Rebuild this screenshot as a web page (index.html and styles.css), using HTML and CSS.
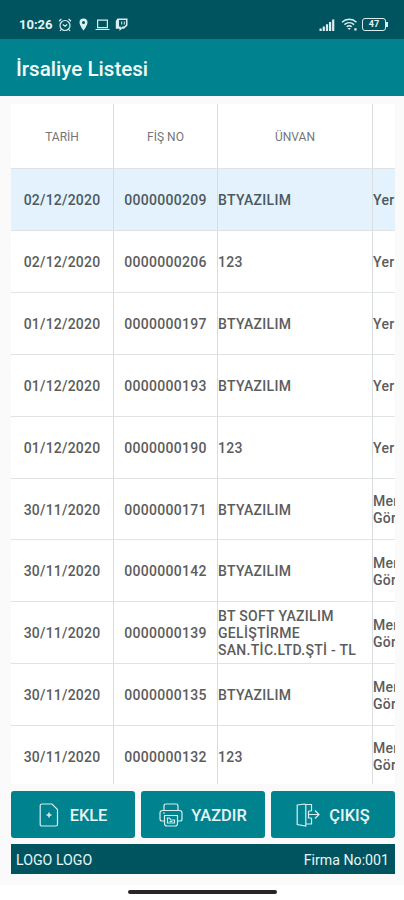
FILE: index.html
```html
<!DOCTYPE html>
<html lang="tr">
<head>
    <meta charset="UTF-8">
    <meta name="viewport" content="width=device-width, initial-scale=1.0">
    <title>İrsaliye Listesi</title>
    <link rel="stylesheet" href="styles.css">
</head>
<body>

    <div class="status-bar">
        <span class="clock">10:26</span>
        <svg class="alarm" width="14" height="14" viewBox="0 0 14 14">
            <circle cx="7" cy="7.5" r="5"/>
            <path d="M1 3.2L3.4 1M13 3.2L10.6 1M4.8 6.5L7 8.3L9.2 6.5M3.2 11.5L2 13M10.8 11.5L12 13"/>
        </svg>
        <svg class="pin" width="9" height="13" viewBox="0 0 9 13">
            <path class="solid" fill-rule="evenodd" d="M4.5 0.5A4 4 0 0 0 0.5 4.5C0.5 7.5 4.5 12.5 4.5 12.5S8.5 7.5 8.5 4.5A4 4 0 0 0 4.5 0.5ZM4.5 3A1.5 1.5 0 1 1 4.5 6A1.5 1.5 0 1 1 4.5 3Z"/>
        </svg>
        <svg class="laptop" width="15" height="12" viewBox="0 0 15 12">
            <path d="M2.6 1.2H12.4V8.6H2.6ZM0.5 10.5H14.5"/>
        </svg>
        <svg class="twitch" width="13" height="14" viewBox="0 0 13 14">
            <path class="solid" fill-rule="evenodd" d="M2.5 0.5H12.5V7.5L9 10.8H6.8L4.5 13V10.8H0.8V3ZM4 2V8.5H5.8V10L7.4 8.5H9L11 6.7V2ZM6.2 3.6H7.2V6.5H6.2ZM8.8 3.6H9.8V6.5H8.8Z"/>
        </svg>
        <span class="space"></span>
        <svg class="signal" width="16" height="12" viewBox="0 0 16 12">
            <path class="solid" d="M0.5 9.5H2.7V12H0.5ZM3.7 7.5H5.9V12H3.7ZM6.9 5.3H9.1V12H6.9ZM10 3H12.2V12H10ZM13.1 0.5H15.3V12H13.1Z"/>
        </svg>
        <svg class="wifi" width="17" height="13" viewBox="0 0 17 13">
            <path d="M1 4.2C5 0.4 11.5 0.4 15.5 4.2M3.4 6.6C6.3 4 10.2 4 13.1 6.6M5.7 8.8C7.2 7.5 9.3 7.5 10.8 8.8"/>
            <path class="solid" d="M6.5 10L8.25 12L10 10ZM13.3 10.2H15.6V12.5H13.3Z"/>
        </svg>
        <span class="battery">47</span>
        <span class="battery-tip"></span>
    </div>

    <div class="header">İrsaliye Listesi</div>

    <main>
        <div class="list">
            <div class="row head"><div>TARİH</div><div>FİŞ NO</div><div>ÜNVAN</div><div></div></div>
            <div class="row selected"><div>02/12/2020</div><div>0000000209</div><div>BTYAZILIM</div><div>Yer</div></div>
            <div class="row"><div>02/12/2020</div><div>0000000206</div><div>123</div><div>Yer</div></div>
            <div class="row"><div>01/12/2020</div><div>0000000197</div><div>BTYAZILIM</div><div>Yer</div></div>
            <div class="row"><div>01/12/2020</div><div>0000000193</div><div>BTYAZILIM</div><div>Yer</div></div>
            <div class="row"><div>01/12/2020</div><div>0000000190</div><div>123</div><div>Yer</div></div>
            <div class="row"><div>30/11/2020</div><div>0000000171</div><div>BTYAZILIM</div><div>Mer<br>Gör</div></div>
            <div class="row"><div>30/11/2020</div><div>0000000142</div><div>BTYAZILIM</div><div>Mer<br>Gör</div></div>
            <div class="row"><div>30/11/2020</div><div>0000000139</div><div>BT SOFT YAZILIM<br>GELİŞTİRME<br>SAN.TİC.LTD.ŞTİ - TL</div><div>Mer<br>Gör</div></div>
            <div class="row"><div>30/11/2020</div><div>0000000135</div><div>BTYAZILIM</div><div>Mer<br>Gör</div></div>
            <div class="row"><div>30/11/2020</div><div>0000000132</div><div>123</div><div>Mer<br>Gör</div></div>
        </div>

        <div class="buttons">
            <button class="btn">
                <svg width="20" height="24" viewBox="0 0 20 24">
                    <path d="M3 1H13L18.5 6.5V21.5Q18.5 23 17 23H3Q1.2 23 1.2 21.5V2.5Q1.2 1 3 1Z"/>
                    <path class="plus" d="M10 9.5V14.5M7.5 12H12.5"/>
                </svg>
                <span>EKLE</span>
            </button>
            <button class="btn print">
                <svg width="24" height="24" viewBox="0 0 24 24">
                    <path d="M5 7V3Q5 1 7 1H17Q19 1 19 3V7M5 18H3Q1 18 1 16V10Q1 7.5 3.5 7.5H20.5Q23 7.5 23 10V16Q23 18 21 18H19M5 12.5H19M5.5 13V20.5Q5.5 23 8 23H16Q18.5 23 18.5 20.5V13M8.5 15V20H15.5V17H12L10.5 15ZM10.5 18.5H13.5"/>
                    <path d="M4 10H6"/>
                </svg>
                <span>YAZDIR</span>
            </button>
            <button class="btn exit">
                <svg width="24" height="24" viewBox="0 0 24 24">
                    <path d="M1.2 2L8.5 1Q9.8 1 9.8 2.5V23L1.2 21.5ZM9.8 1.5H15.5V8M9.8 21H15.5V15M12.5 8V15H15.5M12.5 8H15.5M13 11.5H23M19 7.5L23 11.5L19 15.5"/>
                </svg>
                <span>ÇIKIŞ</span>
            </button>
        </div>

        <div class="footer">
            <span>LOGO LOGO</span>
            <span>Firma No:001</span>
        </div>
    </main>

    <div class="nav-bar"><span></span></div>

</body>
</html>
```
FILE: styles.css
```css
* {
    box-sizing: border-box;
}
body {
    font-family: Roboto, sans-serif;
    margin: 0;
    height: 900px;
    display: flex;
    flex-direction: column;
    background-color: #fff;
    overflow: hidden;
}
svg {
    fill: none;
    stroke: #d9eef0;
    stroke-width: 1.2;
    flex: none;
}
.solid {
    fill: #d9eef0;
    stroke: none;
}

/* Status bar */
.status-bar {
    height: 39px;
    padding: 10px 16px 0 19px;
    display: flex;
    align-items: center;
    background-color: #00545f;
    color: #e4f3f4;
}
.clock {
    width: 39px;
    font-size: 13px;
    font-weight: 700;
}
.pin {
    margin-left: 7px;
}
.laptop {
    margin-left: 7px;
}
.twitch {
    margin-left: 5px;
}
.space {
    flex: 1;
}
.wifi {
    margin-left: 6px;
}
.wifi path:first-child {
    stroke-width: 1.5;
}
.battery {
    width: 24px;
    height: 13px;
    margin-left: 4px;
    border: 1.5px solid #d9eef0;
    border-radius: 3px;
    font-size: 9px;
    font-weight: 700;
    line-height: 11px;
    text-align: center;
}
.battery-tip {
    width: 2px;
    height: 5px;
    background-color: #d9eef0;
}

.header {
    height: 57px;
    padding-left: 16px;
    background-color: #00838f;
    color: #f3fbfb;
    font-size: 20.6px;
    font-weight: 500;
    line-height: 60px;
}

main {
    height: 789px;
    padding: 8px 9px 0 11px;
    background-color: #fafafa;
}

/* List */
.list {
    height: 680px;
    overflow: hidden;
    background-color: #fff;
}
.row {
    width: 484px;
    height: 61.85px;
    display: grid;
    grid-template-columns: 103px 104px 155px 122px;
    border-bottom: 1px solid #dfe3e4;
    color: #5c5c5c;
    font-size: 14px;
    font-weight: 500;
    line-height: 17px;
    letter-spacing: 0.3px;
}
.row > div {
    display: flex;
    align-items: center;
    padding-top: 2px;
    border-right: 1px solid #d9dddf;
}
.row > div:nth-child(-n+2) {
    justify-content: center;
}
.row > div:first-child {
    letter-spacing: 0.2px;
}
.row.head {
    height: 65.4px;
    color: #757575;
    font-size: 12px;
    font-weight: 400;
}
.head > div {
    justify-content: center;
}
.row.head > div {
    letter-spacing: 0;
}
.selected {
    background-color: #e3f2fd;
    color: #4c5961;
}

/* Buttons */
.buttons {
    display: flex;
    gap: 6px;
    margin-top: 7px;
}
.btn {
    flex: 1;
    height: 47px;
    padding: 0;
    display: flex;
    align-items: center;
    justify-content: center;
    gap: 11px;
    border: none;
    border-radius: 3px;
    background-color: #00838f;
    color: #e8f6f7;
    font-family: inherit;
    font-size: 16.4px;
    font-weight: 500;
}
.btn span {
    padding-top: 2px;
}
.print {
    gap: 8px;
}
.exit {
    gap: 9px;
}
.plus {
    stroke-width: 1.5;
}

.footer {
    height: 30px;
    margin-top: 6px;
    padding: 2px 6px 0 5px;
    display: flex;
    align-items: center;
    justify-content: space-between;
    background-color: #00545f;
    color: #eaf5f6;
    font-size: 14.2px;
}

.nav-bar {
    flex: 1;
    display: flex;
    justify-content: center;
    padding-top: 5px;
}
.nav-bar span {
    width: 149px;
    height: 4px;
    border-radius: 2px;
    background-color: #2b2427;
}
```
